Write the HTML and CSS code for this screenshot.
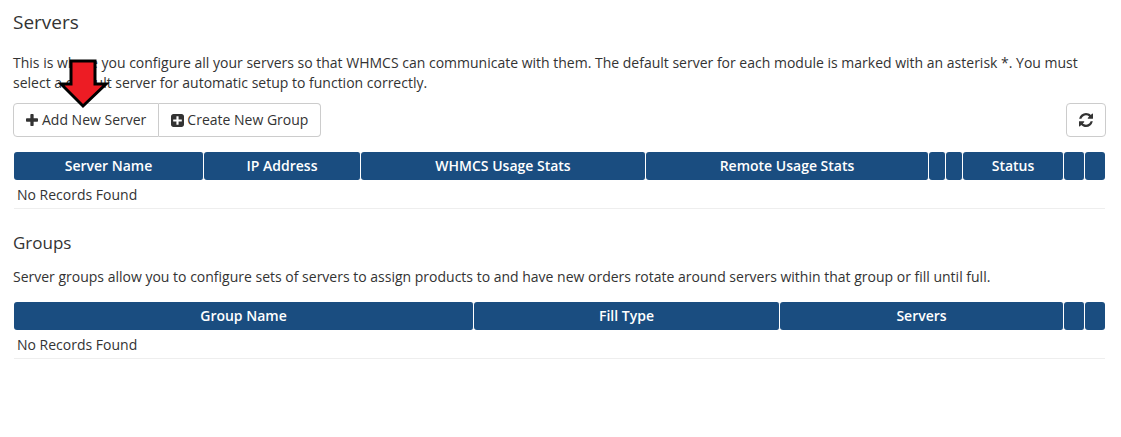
FILE: index.html
```html
<!DOCTYPE html>
<html lang="en">
<head>
    <meta charset="UTF-8">
    <title>Servers</title>
    <link rel="stylesheet" href="styles.css">
</head>
<body>
    <h1 class="page-title">Servers</h1>
    <p class="intro">This is where you configure all your servers so that WHMCS can communicate with them. The default server for each module is marked with an asterisk *. You must select a default server for automatic setup to function correctly.</p>

    <div class="toolbar">
        <div class="btn-group">
            <a class="btn" href="#">
                <svg class="icon" viewBox="192 128 1408 1408"><path d="M1600 736v192q0 40-28 68t-68 28h-416v416q0 40-28 68t-68 28h-192q-40 0-68-28t-28-68v-416h-416q-40 0-68-28t-28-68v-192q0-40 28-68t68-28h416v-416q0-40 28-68t68-28h192q40 0 68 28t28 68v416h416q40 0 68 28t28 68z"/></svg>
                Add New Server
            </a>
            <a class="btn" href="#">
                <svg class="icon icon-square" viewBox="128 128 1536 1536"><path d="M1408 960v-128q0-26-19-45t-45-19h-320v-320q0-26-19-45t-45-19h-128q-26 0-45 19t-19 45v320h-320q-26 0-45 19t-19 45v128q0 26 19 45t45 19h320v320q0 26 19 45t45 19h128q26 0 45-19t19-45v-320h320q26 0 45-19t19-45zm256-544v960q0 119-84.500 203.500t-203.500 84.500h-960q-119 0-203.500-84.500t-84.500-203.500v-960q0-119 84.500-203.500t203.500-84.500h960q119 0 203.500 84.500t84.500 203.500z"/></svg>
                Create New Group
            </a>
        </div>
        <a class="btn btn-refresh" href="#">
            <svg class="icon-refresh" viewBox="128 128 1536 1536"><path d="M1639 1056q0 5-1 7-64 268-268 434.500t-478 166.500q-146 0-282.500-55t-243.500-157l-129 129q-19 19-45 19t-45-19-19-45v-448q0-26 19-45t45-19h448q26 0 45 19t19 45-19 45l-137 137q71 66 161 102t187 36q134 0 250-65t186-179q11-17 53-117 8-23 30-23h192q13 0 22.500 9.500t9.500 22.500zm25-800v448q0 26-19 45t-45 19h-448q-26 0-45-19t-19-45 19-45l138-138q-148-137-349-137-134 0-250 65t-186 179q-11 17-53 117-8 23-30 23h-199q-13 0-22.500-9.500t-9.500-22.500v-7q65-268 270-434.500t480-166.500q146 0 284 55.500t245 156.500l130-129q19-19 45-19t45 19 19 45z"/></svg>
        </a>
    </div>

    <table class="data-table">
        <colgroup>
            <col class="c-190"><col class="c-157"><col class="c-285"><col class="c-283"><col class="c-17"><col class="c-17"><col class="c-101"><col class="c-21"><col class="c-20">
        </colgroup>
        <thead>
            <tr>
                <th>Server Name</th>
                <th>IP Address</th>
                <th>WHMCS Usage Stats</th>
                <th>Remote Usage Stats</th>
                <th></th>
                <th></th>
                <th>Status</th>
                <th></th>
                <th></th>
            </tr>
        </thead>
        <tbody>
            <tr><td colspan="9">No Records Found</td></tr>
        </tbody>
    </table>

    <h2 class="section-title">Groups</h2>
    <p class="section-text">Server groups allow you to configure sets of servers to assign products to and have new orders rotate around servers within that group or fill until full.</p>

    <table class="data-table">
        <colgroup>
            <col class="c-460"><col class="c-306"><col class="c-284"><col class="c-21"><col class="c-20">
        </colgroup>
        <thead>
            <tr>
                <th>Group Name</th>
                <th>Fill Type</th>
                <th>Servers</th>
                <th></th>
                <th></th>
            </tr>
        </thead>
        <tbody>
            <tr><td colspan="5">No Records Found</td></tr>
        </tbody>
    </table>

    <svg class="arrow" viewBox="0 0 52 52"><path d="M13 3h24v23h11L25 48 3 26h10z"/></svg>
</body>
</html>
```

FILE: styles.css
```css
html, body {
    height: 100%;
}

body {
    font-family: "Open Sans", Arial, sans-serif;
    font-size: 14px;
    line-height: 20px;
    color: #333;
    background: #fff;
    margin: 0;
    padding: 9px 15px 0 13px;
    position: relative;
    overflow: hidden;
    box-sizing: border-box;
}

.page-title {
    font-size: 19px;
    line-height: 26px;
    font-weight: 400;
    margin: 0 0 18px;
}

.intro {
    margin: 0 0 10px;
}

.toolbar {
    display: flex;
    justify-content: space-between;
    margin-bottom: 15px;
}

.btn-group {
    display: flex;
}

.btn {
    display: flex;
    align-items: center;
    gap: 4px;
    height: 34px;
    box-sizing: border-box;
    padding: 0 12px;
    color: #333;
    text-decoration: none;
    background: #fff;
    border: 1px solid #ccc;
}

.btn-group .btn:first-child {
    border-radius: 4px 0 0 4px;
}

.btn-group .btn:last-child {
    border-left: 0;
    border-radius: 0 4px 4px 0;
}

.btn-refresh {
    width: 40px;
    justify-content: center;
    padding: 0;
    border-radius: 4px;
}

.icon {
    width: 12px;
    height: 12px;
    fill: #333;
}

.icon-square {
    width: 13px;
    height: 13px;
    margin-right: -1px;
}

.icon-refresh {
    width: 14px;
    height: 14px;
    fill: #333;
}

.data-table {
    width: 1091px;
    table-layout: fixed;
    border-collapse: separate;
    border-spacing: 0;
    margin-left: 1px;
}

.data-table th {
    height: 28px;
    padding: 0;
    box-sizing: border-box;
    background: #1a4d80;
    color: #fff;
    font-weight: 600;
    text-align: center;
    border-right: 1px solid #fff;
    border-radius: 3px;
}

.data-table th:last-child {
    border-right: 0;
}

.data-table td {
    height: 29px;
    padding: 1px 3px 0;
    box-sizing: border-box;
    border-bottom: 1px solid #eee;
}

.section-title {
    font-size: 17px;
    line-height: 22px;
    font-weight: 400;
    margin: 23px 0 13px;
}

.section-text {
    margin: 0 0 15px;
}

.arrow {
    position: absolute;
    left: 58px;
    top: 58px;
    width: 52px;
    height: 52px;
    fill: #ed1c24;
    stroke: #000;
    stroke-width: 3;
}

.c-190 { width: 190px; }
.c-157 { width: 157px; }
.c-285 { width: 285px; }
.c-283 { width: 283px; }
.c-17 { width: 17px; }
.c-101 { width: 101px; }
.c-21 { width: 21px; }
.c-20 { width: 20px; }
.c-460 { width: 460px; }
.c-306 { width: 306px; }
.c-284 { width: 284px; }
```
